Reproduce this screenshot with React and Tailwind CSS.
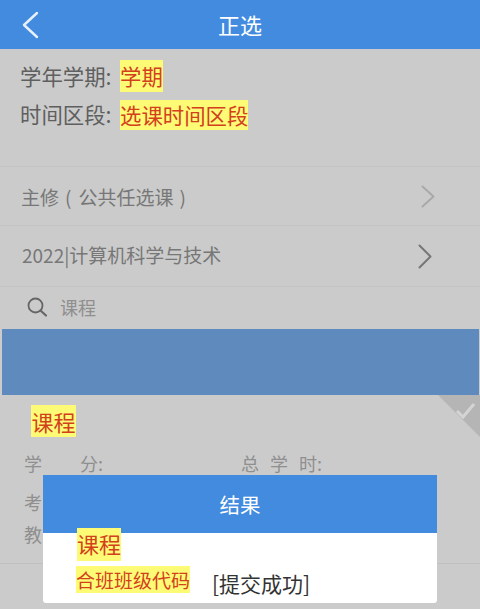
import React from 'react';

const cjk = { fontFamily: '"Noto Sans CJK SC", "Noto Sans", sans-serif' };

function Mark({ className, children }) {
  return <span className={`bg-[#fdfb76] text-[#d2401c] ${className}`}>{children}</span>;
}

function Chevron({ stroke, h }) {
  return (
    <svg width="14" height={h} viewBox={`0 0 14 ${h}`} fill="none">
      <path d={`M1.5 1.5L12.5 ${h / 2}L1.5 ${h - 1.5}`} stroke={stroke} strokeWidth="2" strokeLinecap="round" strokeLinejoin="round" />
    </svg>
  );
}

export default function App() {
  return (
    <div style={cjk} className="relative h-[609px] w-[480px] overflow-hidden bg-[#cbcbcb]">
      <header className="relative flex h-[49px] items-center justify-center bg-[#428bdf] text-[22px] text-white">
        <svg className="absolute left-[21px] top-[11px]" width="18" height="28" viewBox="0 0 18 28" fill="none">
          <path d="M16 2L3 14l13 12" stroke="#e8f1fb" strokeWidth="2.4" strokeLinecap="round" strokeLinejoin="round" />
        </svg>
        <span>正选</span>
      </header>

      <section className="h-[118px] border-b border-[#c4c4c4] pl-[20px] pt-[11px] text-[21.4px] text-[#5f5f5f]">
        <div className="flex h-[32px] items-center">
          <span className="w-[100px]">学年学期:</span>
          <Mark className="flex h-[32px] items-center leading-none">学期</Mark>
        </div>
        <div className="mt-[8px] flex h-[30px] items-center">
          <span className="w-[100px] pb-[2px]">时间区段:</span>
          <Mark className="flex h-[30px] items-center leading-none">选课时间区段</Mark>
        </div>
      </section>

      <div className="flex h-[59px] items-center justify-between border-b border-[#c4c4c4] pl-[21px] pr-[45px] text-[19px] text-[#777777]">
        <span className="flex pt-[3px]">
          <span>主修</span>
          <span className="ml-[6px]">(</span>
          <span className="ml-[7px]">公共任选课</span>
          <span className="ml-[6px]">)</span>
        </span>
        <Chevron stroke="#a9a9a9" h={23} />
      </div>
      <div className="flex h-[61px] items-center justify-between border-b border-[#c4c4c4] pl-[22px] pr-[48px] text-[19px] text-[#777777]">
        <span className="pb-[1px]">2022|计算机科学与技术</span>
        <Chevron stroke="#777777" h={25} />
      </div>

      <div className="flex h-[42px] items-center pb-[2px] pl-[27px] text-[18px] text-[#8f8f8f]">
        <svg width="20" height="20" viewBox="0 0 20 20" fill="none" className="mr-[13px]">
          <circle cx="8.5" cy="8.5" r="7" stroke="#666666" strokeWidth="1.8" />
          <path d="M13.5 13.5l5.5 5" stroke="#666666" strokeWidth="2.2" strokeLinecap="round" />
        </svg>
        <span>课程</span>
      </div>

      <div className="ml-[2px] mr-[1px] h-[66px] bg-[#5f8abd]" />

      <section className="relative h-[169px] border-b border-[#c0c0c0]">
        <div className="absolute right-0 top-0 h-[42px] w-[42px] bg-[#b5b5b5] [clip-path:polygon(0_0,100%_0,100%_100%)]" />
        <svg className="absolute right-[4px] top-[6px]" width="21" height="18" viewBox="0 0 21 18" fill="none">
          <path d="M2 10l6 6L19 3" stroke="#d4d4d4" strokeWidth="3" />
        </svg>

        <div className="pl-[31px] pt-[10px]">
          <Mark className="flex h-[32px] w-[45px] items-center justify-center text-[22px] leading-none">课程</Mark>
        </div>
        <div className="mt-[13px] flex h-[26px] items-center pl-[24px] text-[18px] text-[#8f8f8f]">
          <span className="w-[56px]">学</span>
          <span className="w-[161px]">分:</span>
          <span className="tracking-[11px]">总学</span>
          <span>时:</span>
        </div>
        <div className="mt-[10px] pl-[24px] text-[18px] leading-[32px] text-[#8f8f8f]">
          <div>考</div>
          <div>教</div>
        </div>
      </section>

      <div className="absolute left-[43px] top-[475px] h-[128px] w-[394px] overflow-hidden rounded-b-[3px] bg-white">
        <div className="flex h-[58px] items-center justify-center bg-[#428bdf] text-[20.5px] text-white">结果</div>
        <div className="relative">
          <Mark className="absolute left-[34px] top-[-5px] flex h-[33px] items-center pb-[3px] text-[22px] leading-none">课程</Mark>
          <div className="absolute left-[33px] top-[33px] flex items-start">
            <Mark className="flex h-[27px] items-center text-[19px] leading-none">合班班级代码</Mark>
            <span className="ml-[22px] mt-[2px] whitespace-nowrap text-[21px] leading-[30px] text-[#333333]">[提交成功]</span>
          </div>
        </div>
      </div>
    </div>
  );
}
